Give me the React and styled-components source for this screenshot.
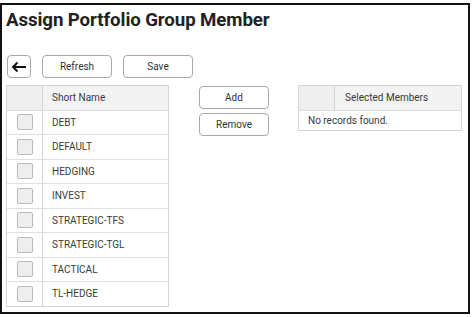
import React from 'react';
import styled, { createGlobalStyle } from 'styled-components';

const GlobalStyle = createGlobalStyle`
    html, body {
        margin: 0;
        padding: 0;
        background: #fff;
    }
    body {
        font-family: Roboto, "Liberation Sans", sans-serif;
        color: #333;
    }
`;

const Frame = styled.div`
    box-sizing: border-box;
    margin-top: 3px;
    width: 470px;
    height: 311px;
    border: 2px solid #111;
    padding: 3px 4px 0 4px;
`;

const Title = styled.h1`
    margin: 0;
    font-size: 18.7px;
    font-weight: 700;
    color: #222;
    letter-spacing: -0.1px;
    line-height: 24px;
`;

const Toolbar = styled.div`
    display: flex;
    align-items: center;
    gap: 11px;
    margin-top: 23px;
    padding-left: 1px;
`;

const Button = styled.button`
    box-sizing: border-box;
    width: ${p => p.$w || 70}px;
    height: 23px;
    padding: 0;
    background: #fff;
    border: 1px solid #a9a9a9;
    border-radius: 4px;
    font-family: Roboto, "Liberation Sans", sans-serif;
    font-size: 10px;
    color: #333;
    display: flex;
    align-items: center;
    justify-content: center;
`;

const Body = styled.div`
    display: flex;
    align-items: flex-start;
    margin-top: 7px;
`;

const Table = styled.div`
    box-sizing: border-box;
    width: ${p => p.$w}px;
    border: 1px solid #d4d4d4;
    font-size: 10px;
    color: #3a3a3a;
`;

const Row = styled.div`
    display: grid;
    grid-template-columns: 36px 1fr;
    height: ${p => p.$h || 24.5}px;
    border-top: ${p => (p.$first ? 'none' : '1px solid #dedede')};
    background: ${p => (p.$head ? '#f3f3f3' : '#fff')};
    box-sizing: border-box;
`;

const CheckCell = styled.div`
    border-right: 1px solid #d4d4d4;
    display: flex;
    align-items: center;
    justify-content: center;
    background: ${p => (p.$head ? '#efefef' : '#fff')};
`;

const Box = styled.span`
    box-sizing: border-box;
    width: 16px;
    height: 16px;
    border: 1px solid #b9b9b9;
    border-radius: 2px;
    background: #eeeeee;
`;

const Cell = styled.div`
    display: flex;
    align-items: center;
    padding-left: ${p => p.$pad || 9}px;
    white-space: nowrap;
`;

const Empty = styled.div`
    height: 19px;
    display: flex;
    align-items: center;
    padding-left: 9px;
    border-top: 1px solid #dedede;
`;

const Actions = styled.div`
    display: flex;
    flex-direction: column;
    gap: 4px;
    margin-left: 30px;
    margin-top: 1px;
`;

const RightCol = styled.div`
    margin-left: 29px;
`;

const Arrow = () => (
    <svg width="16" height="12" viewBox="0 0 16 12">
        <path d="M15 6H2M6.5 1.5L2 6l4.5 4.5" fill="none" stroke="#111" strokeWidth="2" />
    </svg>
);

const groups = ['DEBT', 'DEFAULT', 'HEDGING', 'INVEST', 'STRATEGIC-TFS', 'STRATEGIC-TGL', 'TACTICAL', 'TL-HEDGE'];

const App = () => {
    return (
        <>
            <GlobalStyle />
            <Frame>
                <Title>Assign Portfolio Group Member</Title>
                <Toolbar>
                    <Button $w={24}><Arrow /></Button>
                    <Button>Refresh</Button>
                    <Button>Save</Button>
                </Toolbar>
                <Body>
                    <Table $w={163}>
                        <Row $head $first $h={23.5}>
                            <CheckCell $head />
                            <Cell>Short Name</Cell>
                        </Row>
                        {groups.map(g => (
                            <Row key={g}>
                                <CheckCell><Box /></CheckCell>
                                <Cell>{g}</Cell>
                            </Row>
                        ))}
                    </Table>
                    <Actions>
                        <Button>Add</Button>
                        <Button>Remove</Button>
                    </Actions>
                    <RightCol>
                        <Table $w={164}>
                            <Row $head $first $h={23.5}>
                                <CheckCell $head />
                                <Cell $pad={10}>Selected Members</Cell>
                            </Row>
                            <Empty>No records found.</Empty>
                        </Table>
                    </RightCol>
                </Body>
            </Frame>
        </>
    );
};

export default App;
